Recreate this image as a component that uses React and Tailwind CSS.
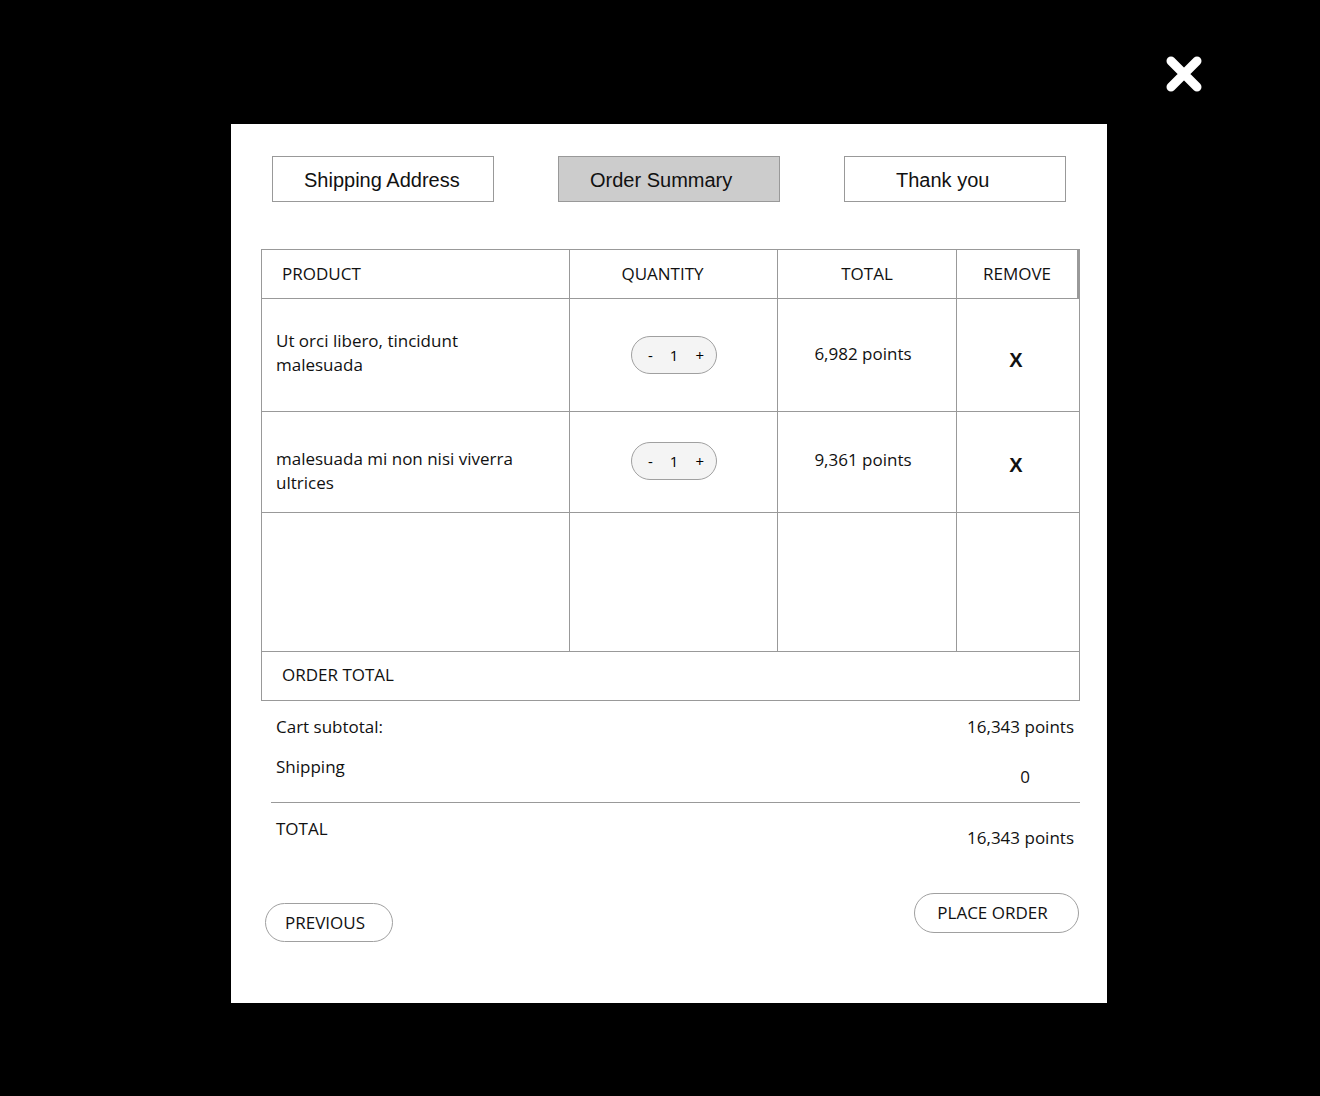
import React from "react";

const body = { fontFamily: '"Open Sans", "Noto Sans", sans-serif' };

function Stepper() {
  return (
    <div className="flex h-[38px] w-[86px] items-center justify-center gap-[17px] rounded-full border border-[#a0a0a0] bg-[#f4f4f4] pl-[5px] text-[15px] text-black">
      <span>-</span>
      <span>1</span>
      <span>+</span>
    </div>
  );
}

function ItemRow({ name, total, h, textPt, stepPt, totalPt, xPt }) {
  return (
    <div className={`flex border-b border-[#999] ${h}`}>
      <div className={`w-[308px] border-r border-[#999] pl-[14px] pr-4 ${textPt} leading-[24px]`}>{name}</div>
      <div className={`flex w-[208px] justify-center border-r border-[#999] ${stepPt}`}>
        <Stepper />
      </div>
      <div className={`w-[179px] border-r border-[#999] text-center ${totalPt}`}>
        <span className="-ml-[8px]">{total}</span>
      </div>
      <div className={`flex-1 pr-[4px] text-center ${xPt}`}>
        <span className="text-[20px] font-bold" style={{ fontFamily: '"Liberation Sans", Arial, sans-serif' }}>X</span>
      </div>
    </div>
  );
}

export default function App() {
  return (
    <div className="relative min-h-[1096px] w-full bg-black pt-[124px] pl-[231px]" style={body}>
      {/* close control */}
      <button className="absolute left-[1164px] top-[54px] h-[40px] w-[40px]" aria-label="Close">
        <svg viewBox="0 0 40 40" width="40" height="40">
          <path d="M7 7 L33 33 M33 7 L7 33" stroke="white" strokeWidth="9" strokeLinecap="round" />
        </svg>
      </button>

      <div className="h-[879px] w-[876px] bg-white pl-[30px] pr-[27px] pt-[32px] text-[17px] text-[#111]">
        {/* step tabs */}
        <div className="ml-[11px] flex gap-[64px]" style={{ fontFamily: '"Liberation Sans", Arial, sans-serif' }}>
          <div className="flex h-[46px] w-[222px] items-center border border-[#999] pl-[31px] pt-[2px] text-[20px] text-[#111]">Shipping Address</div>
          <div className="flex h-[46px] w-[222px] items-center border border-[#999] bg-[#cccccc] pl-[31px] pt-[2px] text-[20px] text-[#111]">Order Summary</div>
          <div className="flex h-[46px] w-[222px] items-center border border-[#999] pl-[51px] pt-[2px] text-[20px] text-[#111]">Thank you</div>
        </div>

        {/* cart table */}
        <div className="mt-[47px] w-[819px] border border-[#999]">
          <div className="flex h-[49px] items-center border-b border-[#999]">
            <div className="flex h-full w-[308px] items-center border-r border-[#999] pl-[20px]">PRODUCT</div>
            <div className="flex h-full w-[208px] items-center justify-center border-r border-[#999] pr-[22px]">QUANTITY</div>
            <div className="flex h-full w-[179px] items-center justify-center border-r border-[#999]">TOTAL</div>
            <div className="flex h-full flex-1 items-center justify-center border-r-2 border-[#999]">REMOVE</div>
          </div>
          <ItemRow
            name={<>Ut orci libero, tincidunt<br />malesuada</>}
            total="6,982 points"
            h="h-[113px]"
            textPt="pt-[30px]"
            stepPt="pt-[37px]"
            totalPt="pt-[42px]"
            xPt="pt-[46px]"
          />
          <ItemRow
            name={<>malesuada mi non nisi viverra<br />ultrices</>}
            total="9,361 points"
            h="h-[101px]"
            textPt="pt-[35px]"
            stepPt="pt-[30px]"
            totalPt="pt-[35px]"
            xPt="pt-[38px]"
          />
          <div className="flex h-[139px] border-b border-[#999]">
            <div className="w-[308px] border-r border-[#999]" />
            <div className="w-[208px] border-r border-[#999]" />
            <div className="w-[179px] border-r border-[#999]" />
            <div className="flex-1" />
          </div>
          <div className="flex h-[48px] items-center pb-[3px] pl-[20px]">ORDER TOTAL</div>
        </div>

        {/* totals */}
        <div className="w-[819px] pl-[15px] pr-[6px] leading-[24px]">
          <div className="mt-[14px] flex justify-between">
            <span>Cart subtotal:</span>
            <span>16,343 points</span>
          </div>
          <div className="mt-[16px] flex justify-between">
            <span>Shipping</span>
            <span className="mr-[44px] mt-[10px]">0</span>
          </div>
        </div>
        <div className="ml-[10px] mt-[13px] h-px w-[809px] bg-[#999]" />
        <div className="w-[819px] pl-[15px] pr-[6px] leading-[24px]">
          <div className="mt-[14px] flex justify-between">
            <span>TOTAL</span>
            <span className="mt-[9px]">16,343 points</span>
          </div>
        </div>

        {/* navigation */}
        <div className="mt-[43px] flex w-[819px] items-start justify-between pl-[4px] pr-[1px]">
          <button className="mt-[10px] h-[39px] w-[128px] rounded-full border border-[#a0a0a0] bg-white pr-[8px] text-[17px] text-[#111]">PREVIOUS</button>
          <button className="h-[40px] w-[165px] rounded-full border border-[#a0a0a0] bg-white pr-[8px] text-[17px] text-[#111]">PLACE ORDER</button>
        </div>
      </div>
    </div>
  );
}
